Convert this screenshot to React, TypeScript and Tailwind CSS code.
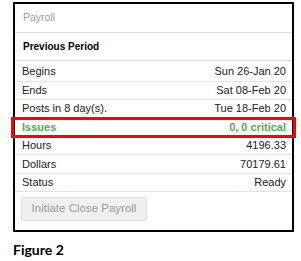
const rows = [
  { label: "Begins", value: "Sun 26-Jan 20", h: "h-[21px]" },
  { label: "Ends", value: "Sat 08-Feb 20", h: "h-[18px]" },
  { label: "Posts in 8 day(s).", value: "Tue 18-Feb 20", h: "h-[18px]" },
];

const rows2 = [
  { label: "Hours", value: "4196.33", h: "h-[18px]" },
  { label: "Dollars", value: "70179.61", h: "h-[19px]" },
  { label: "Status", value: "Ready", h: "h-[18px]" },
];

function Row({ label, value, h }: { label: string; value: string; h: string }) {
  return (
    <div className={`${h} flex items-center justify-between border-b border-[#e3e3e3] pl-[7px] pr-[6px] text-[#222]`}>
      <span>{label}</span>
      <span>{value}</span>
    </div>
  );
}

export default function App() {
  return (
    <div className="w-[301px] h-[261px] bg-white pt-[2px] pl-[13px] font-['Liberation_Sans',Arial,sans-serif] text-[11px]">
      {/* Payroll panel */}
      <div className="w-[281px] h-[230px] border-2 border-black">
        <div className="h-[29px] flex items-center border-b border-[#dcdcdc] pl-[8px] text-[10.5px] text-[#9e9e9e]">
          Payroll
        </div>
        <div className="h-[28px] flex items-center border-b border-[#dcdcdc] pl-[8px] font-bold text-[10px] text-black">
          Previous Period
        </div>
        {rows.map((r) => (
          <Row key={r.label} {...r} />
        ))}
        {/* highlighted issues row */}
        <div className="relative h-[19px] flex items-center justify-between border-b border-[#e3e3e3] pl-[7px] pr-[6px] font-bold text-[#4caf50]">
          <span>Issues</span>
          <span>0, 0 critical</span>
          <div className="absolute left-[-4px] right-[-4px] top-[-1px] bottom-[-2px] border-[3px] border-[#ff0000]" />
        </div>
        {rows2.map((r) => (
          <Row key={r.label} {...r} />
        ))}
        <div className="pl-[6px] pt-[5px]">
          <div className="w-[126px] h-[24px] flex items-center justify-center rounded-[3px] border border-[#dcdcdc] bg-[#f0f0f0] text-[11.5px] text-[#9a9a9a]">
            Initiate Close Payroll
          </div>
        </div>
      </div>
      <div className="mt-[7px] font-['Lato',sans-serif] font-bold text-[14px] text-black">Figure 2</div>
    </div>
  );
}
